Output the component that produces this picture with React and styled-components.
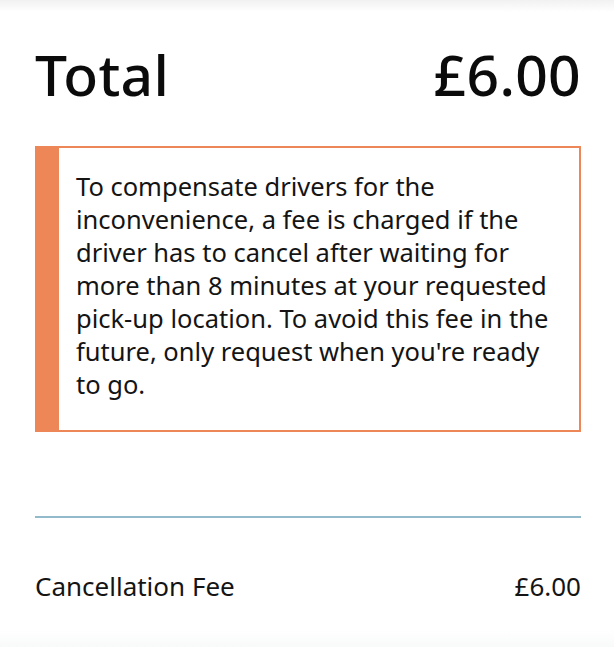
import React from "react";
import styled, { createGlobalStyle } from "styled-components";

const GlobalStyle = createGlobalStyle`
    html, body {
        margin: 0;
        padding: 0;
        background: #ffffff;
    }
    body {
        font-family: "Noto Sans", "Open Sans", sans-serif;
        color: #111111;
    }
`;

const Page = styled.div`
    width: 614px;
    height: 647px;
    box-sizing: border-box;
    padding: 0 33px 0 35px;
    background: linear-gradient(
        to bottom,
        #f1f1f1 0px,
        #ffffff 12px,
        #ffffff 630px,
        #f8faf9 647px
    );
    display: flex;
    flex-direction: column;
`;

const TotalRow = styled.div`
    display: flex;
    justify-content: space-between;
    align-items: center;
    height: 56px;
    margin-top: 46px;
    font-size: 57px;
    font-weight: 500;
    letter-spacing: 0.3px;
    color: #0b0b0b;
`;

const Notice = styled.div`
    margin-top: 44px;
    height: 286px;
    box-sizing: border-box;
    border: 2px solid #ee8757;
    border-left: 24px solid #ee8757;
    padding: 22px 14px 0 17px;
`;

const NoticeText = styled.p`
    margin: 0;
    font-size: 25.5px;
    line-height: 33px;
    color: #141414;
`;

const Divider = styled.hr`
    margin: 84px 0 0 0;
    border: none;
    border-top: 2px solid #93bacb;
`;

const FeeRow = styled.div`
    display: flex;
    justify-content: space-between;
    align-items: center;
    margin-top: 50px;
    height: 36px;
    font-size: 26px;
    color: #141414;
`;

const App = () => (
    <>
        <GlobalStyle />
        <Page>
            <TotalRow>
                <span>Total</span>
                <span>£6.00</span>
            </TotalRow>
            <Notice>
                <NoticeText>
                    To compensate drivers for the inconvenience, a fee is
                    charged if the driver has to cancel after waiting for
                    more than 8 minutes at your requested pick-up location.
                    To avoid this fee in the future, only request when
                    you're ready to go.
                </NoticeText>
            </Notice>
            <Divider />
            <FeeRow>
                <span>Cancellation Fee</span>
                <span>£6.00</span>
            </FeeRow>
        </Page>
    </>
);

export default App;
